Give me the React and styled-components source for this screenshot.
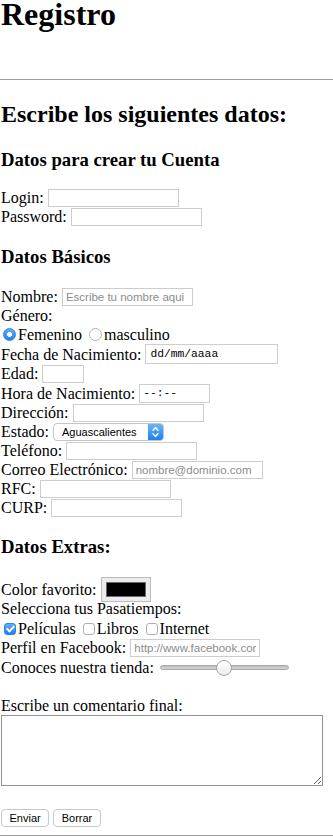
import React from "react";
import styled, { createGlobalStyle } from "styled-components";

const Global = createGlobalStyle`
  html, body { margin: 0; padding: 0; background: #fff; }
  body {
    font-family: "Liberation Serif", "Times New Roman", serif;
    font-size: 16px;
    color: #000;
  }
`;

const Page = styled.form`
  padding: 0 0 0 1px;
  width: 332px;
`;

const Title = styled.h1`
  margin: 0;
  font-size: 32px;
  line-height: 28px;
  font-weight: bold;
`;

const Rule = styled.hr`
  margin: ${(p) => p.$mt}px 0 0 -1px;
  border: none;
  border-top: 1px solid #9d9d9d;
  height: 0;
`;

const SectionTitle = styled.h2`
  margin: 22px 0 0;
  font-size: 24px;
  line-height: 24px;
  font-weight: bold;
`;

const GroupTitle = styled.h3`
  margin: ${(p) => p.$mt}px 0 0;
  font-size: 18.72px;
  line-height: 20px;
  font-weight: bold;
`;

const Row = styled.div`
  display: flex;
  align-items: center;
  height: ${(p) => p.$h || 19}px;
  margin-top: ${(p) => p.$mt || 0}px;
  margin-bottom: ${(p) => p.$mb || 0}px;
  line-height: 19px;
  white-space: nowrap;
`;

const Field = styled.input`
  box-sizing: border-box;
  width: ${(p) => p.$w || 131}px;
  height: ${(p) => p.$h || 18}px;
  margin: 0 0 0 4px;
  padding: 0 3px;
  border: 1px solid #cdcdcd;
  border-radius: 0;
  background: #fff;
  font-family: "Liberation Sans", Arial, sans-serif;
  font-size: 11.5px;
  color: #000;
  outline: none;
  &::placeholder { color: #8c8c8c; }
`;

const MonoField = styled(Field)`
  font-family: "Liberation Mono", "Courier New", monospace;
  font-size: 11.3px;
  padding: 0 0 0 ${(p) => p.$pl || 4}px;
`;

const Radio = styled.input.attrs({ type: "radio" })`
  appearance: none;
  -webkit-appearance: none;
  box-sizing: border-box;
  width: 13px;
  height: 13px;
  margin: 0 2px 0 ${(p) => p.$ml}px;
  border-radius: 50%;
  border: 1px solid #b3b3b3;
  background: #fff;
  &:checked {
    border-color: #2c82ee;
    background: radial-gradient(circle, #fff 0 2.2px, transparent 2.8px),
      linear-gradient(#62acfb, #1f80f4);
  }
`;

const Check = styled.input.attrs({ type: "checkbox" })`
  appearance: none;
  -webkit-appearance: none;
  box-sizing: border-box;
  width: 12px;
  height: 12px;
  margin: 1px 2px 0 ${(p) => p.$ml}px;
  border-radius: 3px;
  border: 1px solid #b0b0b0;
  background: #fff;
  &:checked {
    border-color: #2c82ee;
    background: linear-gradient(#62acfb, #1f80f4);
  }
  &:checked::after {
    content: "";
    display: block;
    width: 3px;
    height: 6px;
    margin: 0 0 0 3px;
    border: solid #fff;
    border-width: 0 2px 2px 0;
    transform: rotate(45deg);
  }
`;

const SelectWrap = styled.span`
  display: inline-flex;
  box-sizing: border-box;
  height: 18px;
  margin-left: 4px;
  border: 1px solid #c6c6c6;
  border-radius: 4px;
  overflow: hidden;
  background: #fff;
`;

const Select = styled.select`
  appearance: none;
  -webkit-appearance: none;
  width: 94px;
  height: 16px;
  border: none;
  outline: none;
  background: transparent;
  padding: 0 0 0 8px;
  font-family: "Liberation Sans", Arial, sans-serif;
  font-size: 11px;
  color: #000;
`;

const SelectArrow = styled.span`
  display: flex;
  align-items: center;
  justify-content: center;
  width: 15px;
  height: 16px;
  background: linear-gradient(#6db4fb, #1c7ff4);
`;

const ColorInput = styled.input.attrs({ type: "color" })`
  appearance: none;
  -webkit-appearance: none;
  box-sizing: border-box;
  width: 50px;
  height: 25px;
  margin: 0 0 0 4px;
  padding: 0;
  border: 1px solid #bdbdbd;
  background: #ececec;
  &::-webkit-color-swatch-wrapper { padding: 4px; }
  &::-webkit-color-swatch { border: 1px solid #6a6a6a; border-radius: 0; }
`;

const Slider = styled.input.attrs({ type: "range" })`
  appearance: none;
  -webkit-appearance: none;
  width: 129px;
  height: 16px;
  margin: 0 0 0 6px;
  padding: 0;
  background: transparent;
  &::-webkit-slider-runnable-track {
    height: 5px;
    border-radius: 3px;
    background: linear-gradient(#bdbdbd, #d6d6d6);
    border: 1px solid #a9a9a9;
  }
  &::-webkit-slider-thumb {
    -webkit-appearance: none;
    appearance: none;
    box-sizing: border-box;
    width: 16px;
    height: 16px;
    margin-top: -6.5px;
    border-radius: 50%;
    border: 1px solid #a3a3a3;
    background: linear-gradient(#ffffff, #ececec);
  }
`;

const Comment = styled.textarea`
  display: block;
  box-sizing: border-box;
  width: 322px;
  height: 71px;
  margin: 0;
  border: 1px solid #929292;
  padding: 2px;
  outline: none;
  font-family: "Liberation Mono", monospace;
  font-size: 13px;
`;

const Buttons = styled.div`
  display: flex;
  gap: 4px;
  margin-top: 23px;
`;

const Button = styled.button`
  box-sizing: border-box;
  height: 18px;
  padding: 0 7.5px;
  border: 1px solid #c8c8c8;
  border-radius: 4px;
  background: #fff;
  font-family: "Liberation Sans", Arial, sans-serif;
  font-size: 11px;
  color: #000;
  line-height: 16px;
`;

export default function App() {
  return (
    <>
      <Global />
      <Page onSubmit={(e) => e.preventDefault()}>
        <Title>Registro</Title>
        <Rule $mt={51} />
        <SectionTitle>Escribe los siguientes datos:</SectionTitle>

        <GroupTitle $mt={24}>Datos para crear tu Cuenta</GroupTitle>
        <Row $mt={18}>Login:<Field type="text" /></Row>
        <Row>Password:<Field type="password" /></Row>

        <GroupTitle $mt={21}>Datos Básicos</GroupTitle>
        <Row $mt={20}>Nombre:<Field type="text" placeholder="Escribe tu nombre aqui" /></Row>
        <Row>Género:</Row>
        <Row>
          <Radio name="genero" defaultChecked $ml={2} />Femenino
          <Radio name="genero" $ml={7} />masculino
        </Row>
        <Row $h={20}>Fecha de Nacimiento:<MonoField type="text" $w={133} $h={20} defaultValue="dd/mm/aaaa" readOnly /></Row>
        <Row>Edad:<Field type="text" $w={42} /></Row>
        <Row $h={20}>Hora de Nacimiento:<MonoField type="text" $w={71} $h={19} $pl={3} defaultValue="--:--" readOnly /></Row>
        <Row>Dirección:<Field type="text" /></Row>
        <Row>
          Estado:
          <SelectWrap>
            <Select defaultValue="ags">
              <option value="ags">Aguascalientes</option>
              <option value="bc">Baja California</option>
            </Select>
            <SelectArrow>
              <svg width="9" height="14" viewBox="0 0 9 14" fill="none" stroke="#fff" strokeWidth="1.4" strokeLinecap="round" strokeLinejoin="round">
                <path d="M2 5.2 L4.5 2.6 L7 5.2" />
                <path d="M2 8.8 L4.5 11.4 L7 8.8" />
              </svg>
            </SelectArrow>
          </SelectWrap>
        </Row>
        <Row>Teléfono:<Field type="tel" /></Row>
        <Row>Correo Electrónico:<Field type="email" placeholder="nombre@dominio.com" /></Row>
        <Row>RFC:<Field type="text" /></Row>
        <Row>CURP:<Field type="text" /></Row>

        <GroupTitle $mt={20}>Datos Extras:</GroupTitle>
        <Row $mt={20} $h={25} $mb={-4}>Color favorito:<ColorInput defaultValue="#000000" /></Row>
        <Row $h={20}>Selecciona tus Pasatiempos:</Row>
        <Row $h={20}>
          <Check defaultChecked $ml={3} />Películas
          <Check $ml={7} />Libros
          <Check $ml={7} />Internet
        </Row>
        <Row>Perfil en Facebook:<Field type="url" $w={130} placeholder="http://www.facebook.com" /></Row>
        <Row $h={21}>Conoces nuestra tienda:<Slider min={0} max={100} defaultValue={50} /></Row>

        <Row $mt={18}>Escribe un comentario final:</Row>
        <Comment />

        <Buttons>
          <Button type="submit">Enviar</Button>
          <Button type="reset">Borrar</Button>
        </Buttons>
        <Rule $mt={8} />
      </Page>
    </>
  );
}
